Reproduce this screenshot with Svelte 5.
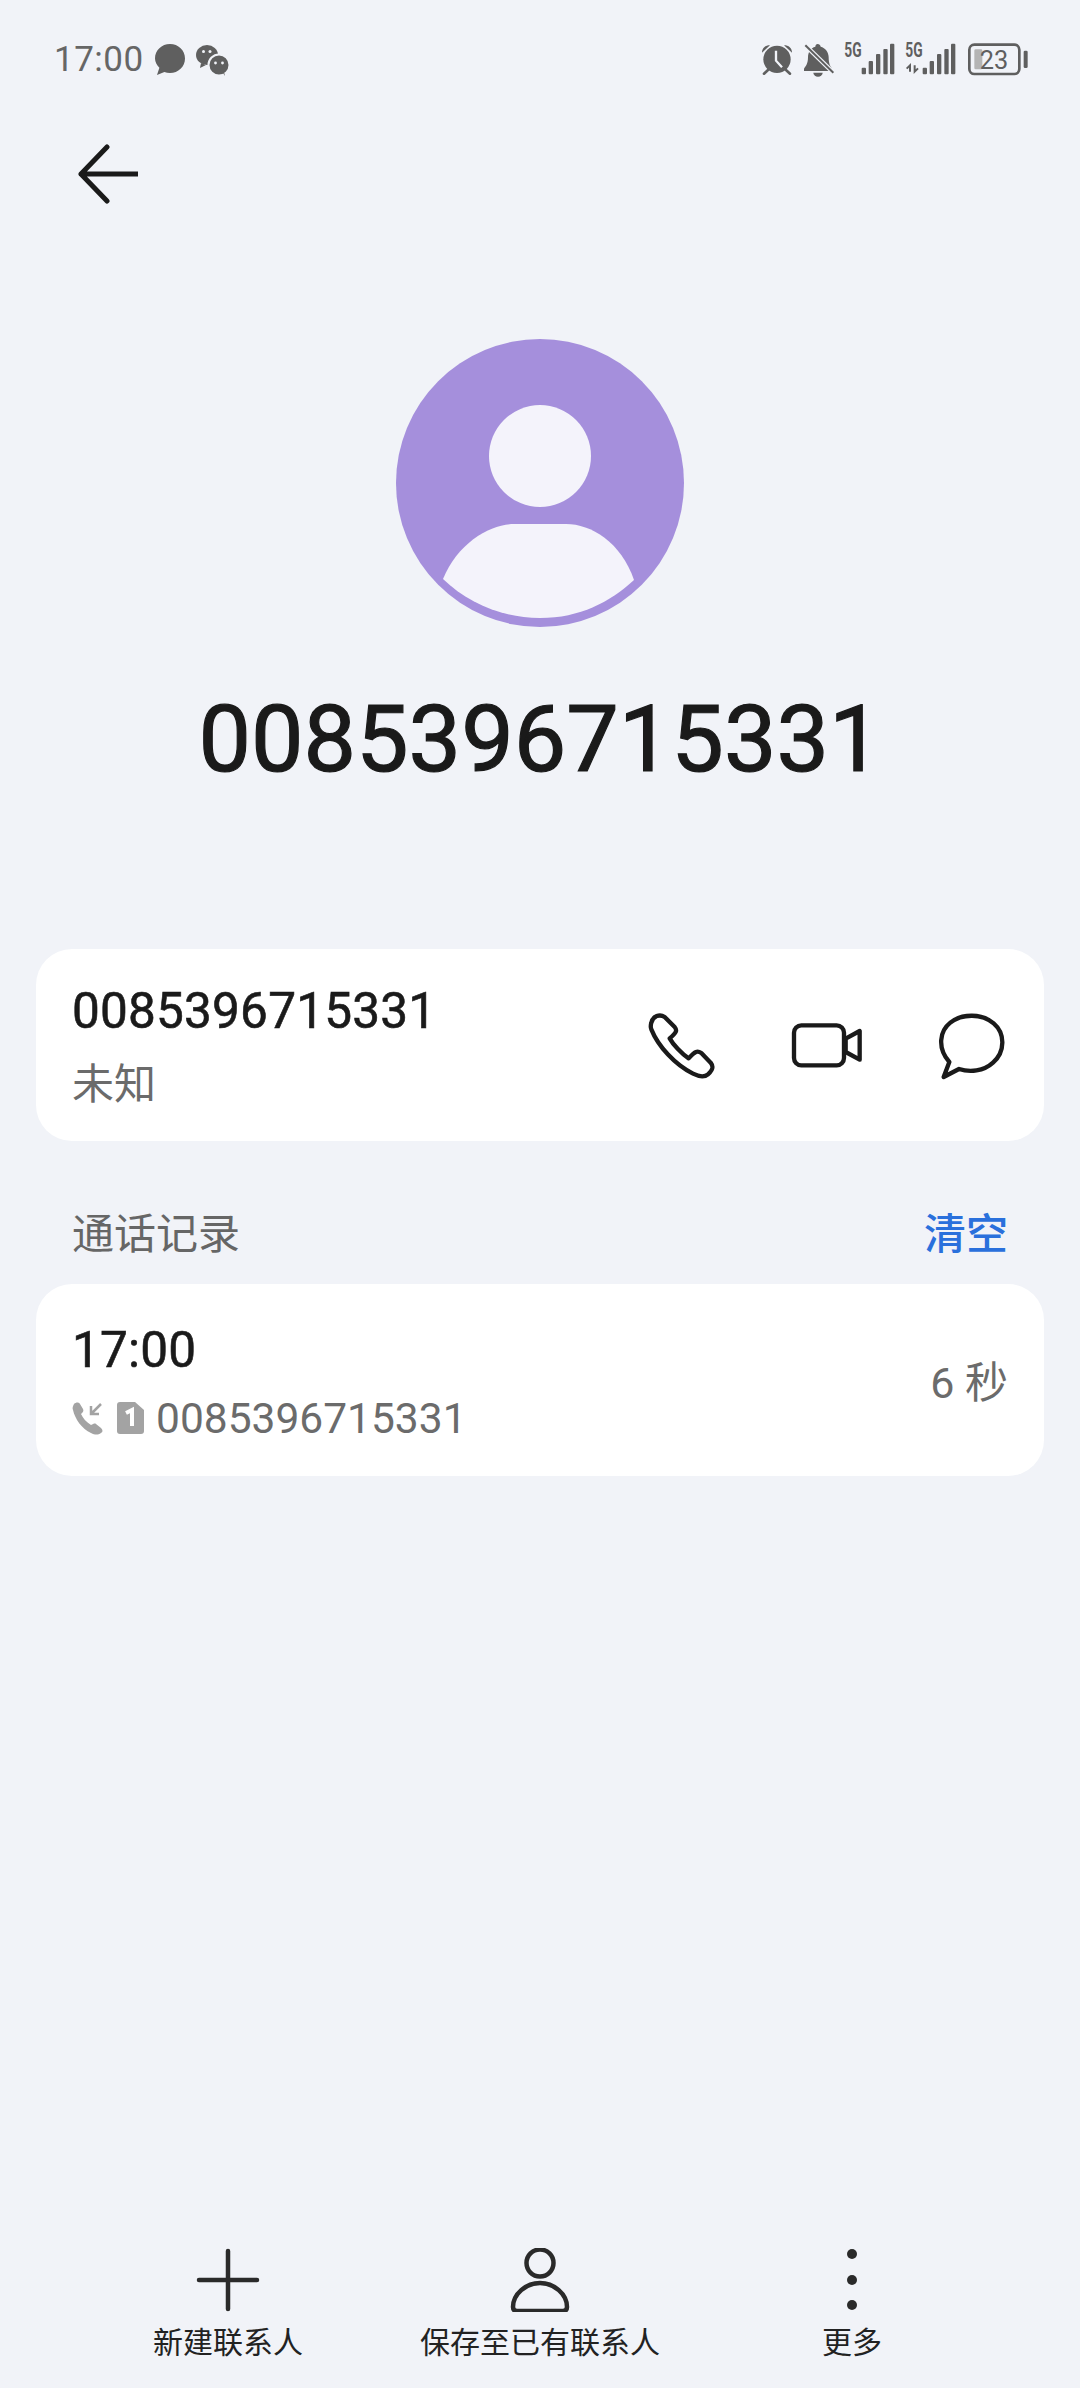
<script>
	const number = '0085396715331';
	const actions = ['新建联系人', '保存至已有联系人', '更多'];
</script>

<div class="page">
	<header class="status">
		<div class="status-left">
			<span class="clock">17:00</span>
			<svg class="notif" width="78" height="34" viewBox="0 0 78 34" fill="#5f5f5f">
				<path d="M16 2c8.300 0 15 6.200 15 14.500S24.300 31 16 31c-2 0-3.900-.4-5.600-1L3 33l2.400-7.300C2.900 23.100 1 20 1 16.500 1 8.200 7.700 2 16 2z" />
				<g transform="translate(3 0)">
					<ellipse cx="50" cy="13" rx="11" ry="10" />
					<path d="M44 21l-1 5 6-3z" />
					<circle cx="62" cy="23" r="10.500" stroke="#f1f3f8" stroke-width="2" />
					<path d="M66 31l2 3-1-4z" />
					<circle cx="46.500" cy="9.500" r="1.500" fill="#f1f3f8" />
					<circle cx="53" cy="9.500" r="1.500" fill="#f1f3f8" />
					<circle cx="58.500" cy="21" r="1.400" fill="#f1f3f8" />
					<circle cx="65.500" cy="21" r="1.400" fill="#f1f3f8" />
				</g>
			</svg>
		</div>
		<svg class="status-right" width="320" height="80" viewBox="0 0 960 240" fill="#5f5f5f">
			<circle cx="111" cy="118" r="41" />
			<path d="M108 92v30l18 20" fill="none" stroke="#f1f3f8" stroke-width="7" />
			<path d="M66 98c0-14 10-22 24-22zM156 98c0-14-10-22-24-22z" />
			<path d="M84 150l-12 11M138 150l12 11" stroke="#5f5f5f" stroke-width="8" stroke-linecap="round" />
			<path d="M233 72c-4 0-7 4-7 8-14 4-22 16-22 32 0 18-6 26-12 34v7h84v-7c-6-8-10-16-10-34 0-16-10-28-24-32 0-4-5-8-9-8z" />
			<path d="M220 158a14 12 0 0 0 28 0z" />
			<path d="M196 76l84 82" stroke="#f1f3f8" stroke-width="13" />
			<path d="M196 76l84 82" stroke="#5f5f5f" stroke-width="6" />
			<text class="five-g" x="313" y="110" textLength="52" lengthAdjust="spacingAndGlyphs">5G</text>
			<rect x="365" y="143" width="13" height="20" rx="3" />
			<rect x="386" y="123" width="13" height="40" rx="3" />
			<rect x="408" y="102" width="13" height="61" rx="3" />
			<rect x="430" y="87" width="13" height="76" rx="3" />
			<rect x="450" y="71" width="13" height="92" rx="3" />
			<text class="five-g" x="496" y="110" textLength="52" lengthAdjust="spacingAndGlyphs">5G</text>
			<path d="M510 155v-19l-10 10M524 136v19l10-10" fill="none" stroke="#5f5f5f" stroke-width="6" />
			<rect x="548" y="143" width="13" height="20" rx="3" />
			<rect x="569" y="123" width="13" height="40" rx="3" />
			<rect x="591" y="102" width="13" height="61" rx="3" />
			<rect x="613" y="87" width="13" height="76" rx="3" />
			<rect x="633" y="71" width="13" height="92" rx="3" />
			<rect x="688" y="74" width="150" height="88" rx="15" fill="none" stroke="#5f5f5f" stroke-width="8" />
			<rect x="703" y="88" width="24" height="60" rx="4" fill="#b4b4b4" />
			<text class="batt" x="762" y="146" text-anchor="middle">23</text>
			<rect x="851" y="92" width="12" height="52" rx="4" />
		</svg>
	</header>

	<nav class="topbar">
		<svg width="64" height="64" viewBox="0 0 64 64" fill="none" stroke="#1a1a1a" stroke-width="5" stroke-linecap="round" stroke-linejoin="round">
			<path d="M7 32L33 5M7 32l26 27M7 32h57" />
		</svg>
	</nav>

	<section class="hero">
		<svg class="avatar" width="288" height="288" viewBox="0 0 288 288">
			<circle cx="144" cy="144" r="144" fill="#a58fdc" />
			<circle cx="144" cy="117" r="51" fill="#f4f3fb" />
			<path d="M47 240C62 203 95 185 118 185h52c25 0 55 18 68 56-24 22-54 38-94 38-38 0-72-15-97-39z" fill="#f4f3fb" />
		</svg>
		<h1>{number}</h1>
	</section>

	<section class="card contact">
		<div class="lines">
			<div class="primary">{number}</div>
			<div class="secondary">未知</div>
		</div>
		<div class="buttons">
			<svg width="72" height="72" viewBox="84 84 216 216" fill="none" stroke="#1a1a1a" stroke-width="13" stroke-linejoin="round">
				<path d="M100 125c5-20 25-27 40-17l30 30c8 10 6 17-15 34 10 18 35 46 57 60 20-22 26-24 38-16l28 29c10 13 6 23-8 35-12 10-25 8-45-2-55-28-105-83-125-133-3-7-2-13 0-20z" />
			</svg>
			<svg width="72" height="72" viewBox="516 86 216 216" fill="none" stroke="#1a1a1a" stroke-width="13" stroke-linejoin="round">
				<rect x="525" y="135" width="150" height="120" rx="22" />
				<path d="M680 175l42-23v86l-42-23z" />
			</svg>
			<svg width="72" height="72" viewBox="947 84 216 216" fill="none" stroke="#1a1a1a" stroke-width="13" stroke-linejoin="round">
				<path d="M987 243C950 200 958 150 990 125c35-28 95-28 130 2 35 30 35 85-2 118-28 26-70 30-102 19l-46 24z" />
			</svg>
		</div>
	</section>

	<div class="section-head">
		<span>通话记录</span>
		<span class="clear">清空</span>
	</div>

	<section class="card record">
		<div class="lines">
			<div class="primary">17:00</div>
			<div class="detail">
				<svg width="32" height="34" viewBox="0 0 32 34" fill="#a3a3a3">
					<path d="M2 3c2-2 5-2 6 0l3 5c1 2 0 3-2 5 2 4 5 8 10 11 2-1 4-2 5-1l5 4c2 2 2 4 0 5-3 2-6 2-10 0C10 28 3 18 1 9c-1-2 0-4 1-6z" />
					<path d="M29 3L19 13m0-8v8h8" fill="none" stroke="#a3a3a3" stroke-width="2.500" />
				</svg>
				<svg class="sim" width="27" height="32" viewBox="0 0 27 32">
					<path d="M3 0h15l9 8v21a3 3 0 0 1-3 3H3a3 3 0 0 1-3-3V3a3 3 0 0 1 3-3z" fill="#a3a3a3" />
					<path d="M9 11l6-3v16" fill="none" stroke="#fff" stroke-width="4" />
				</svg>
				<span>{number}</span>
			</div>
		</div>
		<div class="duration">6 秒</div>
	</section>

	<footer class="toolbar">
		{#each actions as label, i}
			<div class="tool">
				{#if i === 0}
					<svg width="64" height="64" viewBox="0 0 64 64" fill="none" stroke="#2a2a2a" stroke-width="4.500" stroke-linecap="round">
						<path d="M32 3v58M3 32h58" />
					</svg>
				{:else if i === 1}
					<svg width="64" height="64" viewBox="0 0 64 64" fill="none" stroke="#2a2a2a" stroke-width="4.500" stroke-linejoin="round">
						<circle cx="32" cy="15" r="13.500" />
						<path d="M32 35c-14 0-27 11-27 24 0 3 2 4 4 4h46c2 0 4-1 4-4 0-13-13-24-27-24z" />
					</svg>
				{:else}
					<svg width="64" height="64" viewBox="0 0 64 64" fill="#2a2a2a">
						<circle cx="32" cy="6" r="5" />
						<circle cx="32" cy="32" r="5" />
						<circle cx="32" cy="57" r="5" />
					</svg>
				{/if}
				<span>{label}</span>
			</div>
		{/each}
	</footer>
</div>

<style>
	:global(body) {
		background: #f1f3f8;
	}

	.page {
		display: flex;
		flex-direction: column;
		box-sizing: border-box;
		height: 2388px;
		font-family: Roboto, 'Noto Sans CJK SC', sans-serif;
		overflow: hidden;
	}

	.status {
		display: flex;
		justify-content: space-between;
		height: 80px;
		margin-top: 20px;
		padding: 0 20px 0 54px;
	}

	.status-left {
		display: flex;
		align-items: center;
		gap: 10px;
		height: 78px;
	}

	.clock {
		color: #666;
		font-size: 35px;
		letter-spacing: 0.5px;
	}

	.five-g {
		font-family: Roboto, sans-serif;
		font-size: 58px;
		font-weight: 700;
	}

	.batt {
		font-family: Roboto, sans-serif;
		font-size: 76px;
		font-weight: 400;
	}

	.topbar {
		height: 64px;
		padding: 42px 0 0 74px;
	}

	.hero {
		display: flex;
		flex-direction: column;
		align-items: center;
		padding-top: 133px;
	}

	.avatar {
		display: block;
	}

	h1 {
		margin: 57px 0 0;
		color: #1a1a1a;
		font-size: 93.500px;
		font-weight: 400;
		line-height: 110px;
		-webkit-text-stroke: 1.2px #1a1a1a;
	}

	.card {
		display: flex;
		align-items: center;
		justify-content: space-between;
		box-sizing: border-box;
		height: 192px;
		margin: 0 36px;
		padding: 0 36px;
		background: #fff;
		border-radius: 36px;
	}

	.contact {
		margin-top: 155px;
	}

	.primary {
		color: #1a1a1a;
		font-size: 49.500px;
		letter-spacing: 0.2px;
		line-height: 60px;
		-webkit-text-stroke: 0.6px #1a1a1a;
	}

	.secondary {
		margin-top: 19px;
		color: #6b6b6b;
		font-size: 42px;
		line-height: 50px;
	}

	.buttons {
		display: flex;
		gap: 73px;
	}

	.section-head {
		display: flex;
		justify-content: space-between;
		margin: 64px 36px 0;
		padding: 0 36px;
		height: 79px;
		color: #666;
		font-size: 42px;
		line-height: 60px;
	}

	.clear {
		color: #2a70dc;
		font-weight: 500;
	}

	.detail {
		display: flex;
		align-items: center;
		gap: 12.500px;
		height: 44px;
		margin-top: 16px;
		color: #6b6b6b;
		font-size: 42.500px;
	}

	.duration {
		margin-bottom: 2px;
		color: #6b6b6b;
		font-size: 43px;
	}

	.toolbar {
		display: grid;
		grid-template-columns: repeat(3, 312px);
		margin-top: auto;
		padding: 0 72px 25px;
	}

	.tool {
		display: flex;
		flex-direction: column;
		align-items: center;
		color: #222;
		font-size: 30px;
		line-height: 40px;
	}

	.tool svg {
		margin-bottom: 11px;
	}
</style>
